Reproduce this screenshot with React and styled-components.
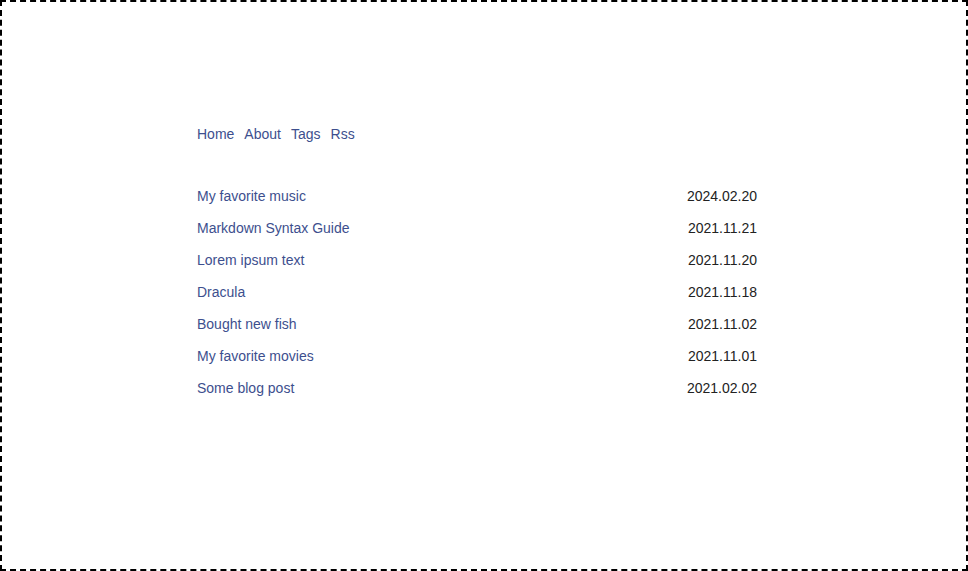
import React from "react";
import styled, { createGlobalStyle } from "styled-components";

const GlobalStyle = createGlobalStyle`
  html, body {
    margin: 0;
    padding: 0;
    background: #ffffff;
  }
  body {
    font-family: "Liberation Sans", Arial, sans-serif;
    font-size: 14px;
    color: #222222;
  }
`;

// Marco punteado que rodea toda la página
const Frame = styled.div`
  box-sizing: border-box;
  width: 100%;
  height: 100vh;
  border: 2px dashed #000000;
`;

// Columna central con el contenido
const Content = styled.main`
  width: 560px;
  margin-left: 195px;
  padding-top: 122px;
`;

const Nav = styled.nav`
  display: flex;
  gap: 10px;
  line-height: 20px;
`;

const Link = styled.a`
  color: #3d4f8e;
  text-decoration: none;
  cursor: pointer;
`;

const PostList = styled.ul`
  list-style: none;
  margin: 36px 0 0 0;
  padding: 0;
`;

const PostRow = styled.li`
  display: flex;
  justify-content: space-between;
  align-items: center;
  height: 32px;
`;

const PostDate = styled.span`
  color: #222222;
  text-align: right;
`;

const navItems = ["Home", "About", "Tags", "Rss"];

const posts = [
  { title: "My favorite music", date: "2024.02.20" },
  { title: "Markdown Syntax Guide", date: "2021.11.21" },
  { title: "Lorem ipsum text", date: "2021.11.20" },
  { title: "Dracula", date: "2021.11.18" },
  { title: "Bought new fish", date: "2021.11.02" },
  { title: "My favorite movies", date: "2021.11.01" },
  { title: "Some blog post", date: "2021.02.02" },
];

function App() {
  return (
    <>
      <GlobalStyle />
      <Frame>
        <Content>
          <Nav>
            {navItems.map((item) => (
              <Link key={item}>{item}</Link>
            ))}
          </Nav>
          <PostList>
            {posts.map((post) => (
              <PostRow key={post.title}>
                <Link>{post.title}</Link>
                <PostDate>{post.date}</PostDate>
              </PostRow>
            ))}
          </PostList>
        </Content>
      </Frame>
    </>
  );
}

export default App;
